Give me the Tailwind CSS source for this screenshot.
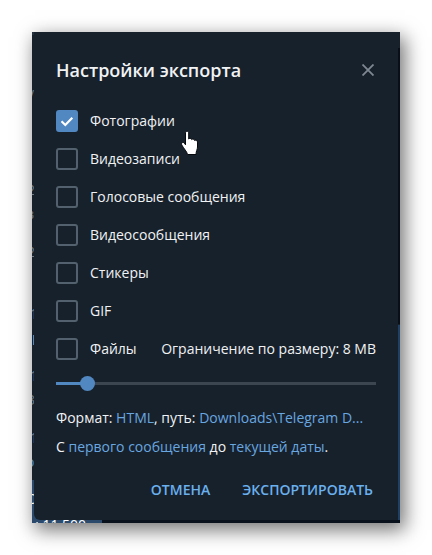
<!DOCTYPE html>
<html lang="ru">
<head>
    <meta charset="UTF-8">
    <meta name="viewport" content="width=device-width, initial-scale=1.0">
    <title>Настройки экспорта</title>
    <script src="https://cdn.jsdelivr.net/npm/@tailwindcss/browser@4"></script>
</head>
<body class="bg-white p-8 font-['Open_Sans','Noto_Sans',sans-serif] text-sm text-[#f0f2f4]">
    <div class="relative bg-[#17212b] shadow-[4px_6px_18px_1px_rgba(0,0,0,0.55)]">
        <!-- chat window behind the dialog -->
        <div class="absolute inset-0 overflow-hidden text-[#6d7883]" aria-hidden="true">
            <div class="absolute top-0 left-0 h-[3px] w-[58px] bg-[#242f3d]"></div>
            <p class="absolute -top-[11px] left-[87px] text-sm leading-4 whitespace-nowrap">был(а) 2 минуты назад</p>
            <div class="absolute top-4 right-0 h-[276px] w-[2px] bg-[#080f18]"></div>
            <div class="absolute right-0 bottom-0 h-[198px] w-[2px] bg-[#1f4064]"></div>
            <div class="absolute right-0 bottom-0 left-0 h-[3px] bg-[#08111c]"></div>
            <div class="absolute bottom-0 left-0 h-[43px] w-[70px] bg-[#2b4a6b]"></div>
            <span class="absolute top-[51px] -left-[5px]">у</span>
            <span class="absolute top-[148px] -left-[5px]">2</span>
            <span class="absolute top-[172px] -left-[6px]">в</span>
            <span class="absolute top-[210px] -left-[5px]">2</span>
            <span class="absolute top-[272px] -left-[2px]">1</span>
            <div class="absolute top-[303px] left-px h-[10px] w-px bg-[#5288c1]"></div>
            <span class="absolute top-[334px] -left-[2px]">1</span>
            <span class="absolute top-[358px] -left-[5px]">3</span>
            <span class="absolute top-[396px] -left-[2px]">1</span>
            <span class="absolute top-[420px] -left-[6px] text-[#5288c1]">о</span>
            <span class="absolute top-[457px] -left-[6px] text-white">С</span>
            <p class="absolute top-[483px] -left-[4px] text-sm leading-5 whitespace-nowrap text-white">ы 11 500</p>
        </div>

        <div class="relative px-[2px] pb-[3px]">
            <form class="rounded-b-md bg-[#17212b] px-[22px] pt-6 pb-3">
                <div class="flex items-center justify-between">
                    <h1 class="text-lg leading-7 font-semibold">Настройки экспорта</h1>
                    <button type="button" aria-label="Закрыть" class="p-[2px] text-[#7d8893]">
                        <svg class="size-3" viewBox="0 0 12 12" fill="none" stroke="currentColor" stroke-width="1.8"><path d="M.5.5l11 11M11.5.5l-11 11"/></svg>
                    </button>
                </div>

                <div class="mt-[26px] space-y-4">
                    <label class="flex h-[22px] items-center gap-3">
                        <span class="grid size-[22px] shrink-0">
                            <input type="checkbox" checked class="peer col-start-1 row-start-1 appearance-none rounded-[3px] border-2 border-[#53606d] checked:border-[#5288c1] checked:bg-[#5288c1]">
                            <svg class="pointer-events-none invisible col-start-1 row-start-1 peer-checked:visible" viewBox="0 0 22 22" fill="none" stroke="white" stroke-width="2.200"><path d="M5.500 11.300l3.800 3.700 7-7.300"/></svg>
                        </span>
                        Фотографии
                    </label>
                    <label class="flex h-[22px] items-center gap-3">
                        <input type="checkbox" class="size-[22px] appearance-none rounded-[3px] border-2 border-[#53606d] checked:border-[#5288c1] checked:bg-[#5288c1]">
                        Видеозаписи
                    </label>
                    <label class="flex h-[22px] items-center gap-3">
                        <input type="checkbox" class="size-[22px] appearance-none rounded-[3px] border-2 border-[#53606d] checked:border-[#5288c1] checked:bg-[#5288c1]">
                        Голосовые сообщения
                    </label>
                    <label class="flex h-[22px] items-center gap-3">
                        <input type="checkbox" class="size-[22px] appearance-none rounded-[3px] border-2 border-[#53606d] checked:border-[#5288c1] checked:bg-[#5288c1]">
                        Видеосообщения
                    </label>
                    <label class="flex h-[22px] items-center gap-3">
                        <input type="checkbox" class="size-[22px] appearance-none rounded-[3px] border-2 border-[#53606d] checked:border-[#5288c1] checked:bg-[#5288c1]">
                        Стикеры
                    </label>
                    <label class="flex h-[22px] items-center gap-3">
                        <input type="checkbox" class="size-[22px] appearance-none rounded-[3px] border-2 border-[#53606d] checked:border-[#5288c1] checked:bg-[#5288c1]">
                        GIF
                    </label>
                    <div class="flex h-[22px] items-center justify-between">
                        <label class="flex items-center gap-3">
                            <input type="checkbox" class="size-[22px] appearance-none rounded-[3px] border-2 border-[#53606d] checked:border-[#5288c1] checked:bg-[#5288c1]">
                            Файлы
                        </label>
                        <label for="size-limit" class="whitespace-nowrap">Ограничение по размеру: 8 MB</label>
                    </div>
                </div>

                <input type="range" id="size-limit" min="0" max="100" value="8" class="mt-4 block h-[15px] w-full appearance-none bg-[linear-gradient(to_right,#5288c1_10%,#3b4651_10%)] bg-[length:100%_3px] bg-center bg-no-repeat [&::-webkit-slider-thumb]:size-[15px] [&::-webkit-slider-thumb]:appearance-none [&::-webkit-slider-thumb]:rounded-full [&::-webkit-slider-thumb]:bg-[#5288c1]">

                <div class="mt-3 leading-[29px]">
                    <p class="truncate">Формат: <a href="#" class="text-[#68a7e0]">HTML</a>, путь: <a href="#" class="text-[#68a7e0]">Downloads\Telegram D...</a></p>
                    <p>С <a href="#" class="text-[#68a7e0]">первого сообщения</a> до <a href="#" class="text-[#68a7e0]">текущей даты</a>.</p>
                </div>

                <div class="mt-[11px] flex justify-end gap-8 pr-[3px] font-semibold text-[#6ab0ee]">
                    <button type="button" class="h-9">ОТМЕНА</button>
                    <button type="submit" class="h-9">ЭКСПОРТИРОВАТЬ</button>
                </div>
            </form>
        </div>

        <!-- mouse pointer -->
        <svg class="pointer-events-none absolute top-[98px] left-[148px] h-[26px] w-5" viewBox="0 0 20 26" fill="white" stroke="#05080c" stroke-width="1"><path d="M5.500 3C5.500.800 8.700.800 8.700 3v6c.5-1 2.700-.8 3 .6.6-.9 2.600-.5 2.800.8.9-.6 3-.2 3 1.700V17c0 2.500-1.500 4-1.500 7.500H7.500C7 21.500 4 19 1.800 15c-1-2.200 1.200-3.400 2.500-1.800l1.200 1.600z"/></svg>
    </div>
</body>
</html>
